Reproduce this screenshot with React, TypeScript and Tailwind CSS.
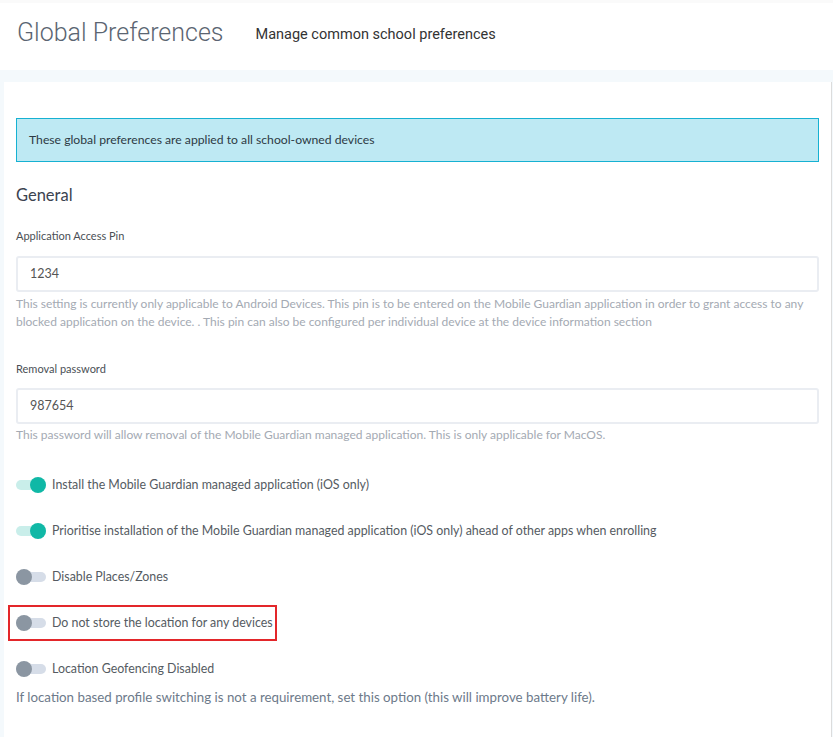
import React from "react";

function Toggle({ on }: { on: boolean }) {
  return (
    <span className="relative inline-block w-[30px] h-[16px] shrink-0">
      <span
        className={
          "absolute left-0 right-0 top-[3px] h-[10px] rounded-full " +
          (on ? "bg-[#c9eeea]" : "bg-[#d6dde8]")
        }
      />
      <span
        className={
          "absolute top-0 w-[16px] h-[16px] rounded-full " +
          (on ? "right-0 bg-[#10b8a6]" : "left-0 bg-[#8b96a2]")
        }
      />
    </span>
  );
}

function ToggleRow({ on, label, boxed }: { on: boolean; label: string; boxed?: boolean }) {
  return (
    <div className="h-[46px] flex items-center">
      <div
        className={
          "flex items-center gap-[6px] " +
          (boxed ? "border-2 border-[#e3262a] -ml-[8px] pl-[6px] pr-[2px] h-[36px]" : "")
        }
      >
        <Toggle on={on} />
        <span className="text-[12.4px] text-[#555b62]">{label}</span>
      </div>
    </div>
  );
}

export default function App() {
  return (
    <div className="w-[833px] h-[737px] overflow-hidden bg-[#f4f9fc] font-['Lato',sans-serif]">
      <div className="h-[3px] bg-[#fafafa]" />
      <div className="h-[67px] bg-white flex items-center pl-[17px] pb-[8px]">
        <h1 className="font-['Roboto',sans-serif] font-light text-[25px] text-[#5b6572] leading-none">
          Global Preferences
        </h1>
        <span className="ml-[32px] font-['Roboto',sans-serif] text-[14.5px] text-[#333] mt-[4px]">
          Manage common school preferences
        </span>
      </div>
      <div className="h-[12px]" />
      <div className="ml-[4px] mr-[1px] bg-white h-[655px] border-r border-[#dcdcdc] pl-[12px] pr-[12px] pt-[36px]">
        <div className="h-[44px] bg-[#bee9f3] border border-[#16b1d2] flex items-center px-[12px] text-[12.2px] text-[#2d3a44]">
          These global preferences are applied to all school-owned devices
        </div>
        <h2 className="mt-[23px] text-[16.5px] text-[#3b4350] leading-[20px]">General</h2>
        <div className="mt-[24px] text-[11px] text-[#4a4f55] leading-[14px]">Application Access Pin</div>
        <div className="mt-[13px] h-[36px] border-2 border-[#eaedf2] rounded-[3px] flex items-center px-[12px] text-[12.5px] text-[#555]">
          1234
        </div>
        <p className="mt-[3px] text-[12px] leading-[18px] text-[#a4aab3]">
          This setting is currently only applicable to Android Devices. This pin is to be entered on the Mobile
          Guardian application in order to grant access to any blocked application on the device. . This pin can
          also be configured per individual device at the device information section
        </p>
        <div className="mt-[31px] text-[11px] text-[#4a4f55] leading-[14px]">Removal password</div>
        <div className="mt-[12px] h-[36px] border-2 border-[#eaedf2] rounded-[3px] flex items-center px-[12px] text-[12.5px] text-[#555]">
          987654
        </div>
        <p className="mt-[2px] text-[12px] leading-[18px] text-[#a4aab3]">
          This password will allow removal of the Mobile Guardian managed application. This is only applicable for
          MacOS.
        </p>
        <div className="mt-[18px]">
          <ToggleRow on label="Install the Mobile Guardian managed application (iOS only)" />
          <ToggleRow
            on
            label="Prioritise installation of the Mobile Guardian managed application (iOS only) ahead of other apps when enrolling"
          />
          <ToggleRow on={false} label="Disable Places/Zones" />
          <ToggleRow on={false} label="Do not store the location for any devices" boxed />
          <ToggleRow on={false} label="Location Geofencing Disabled" />
        </div>
        <p className="-mt-[4px] text-[13.3px] leading-[18px] text-[#6d7a8a]">
          If location based profile switching is not a requirement, set this option (this will improve battery life).
        </p>
      </div>
    </div>
  );
}
